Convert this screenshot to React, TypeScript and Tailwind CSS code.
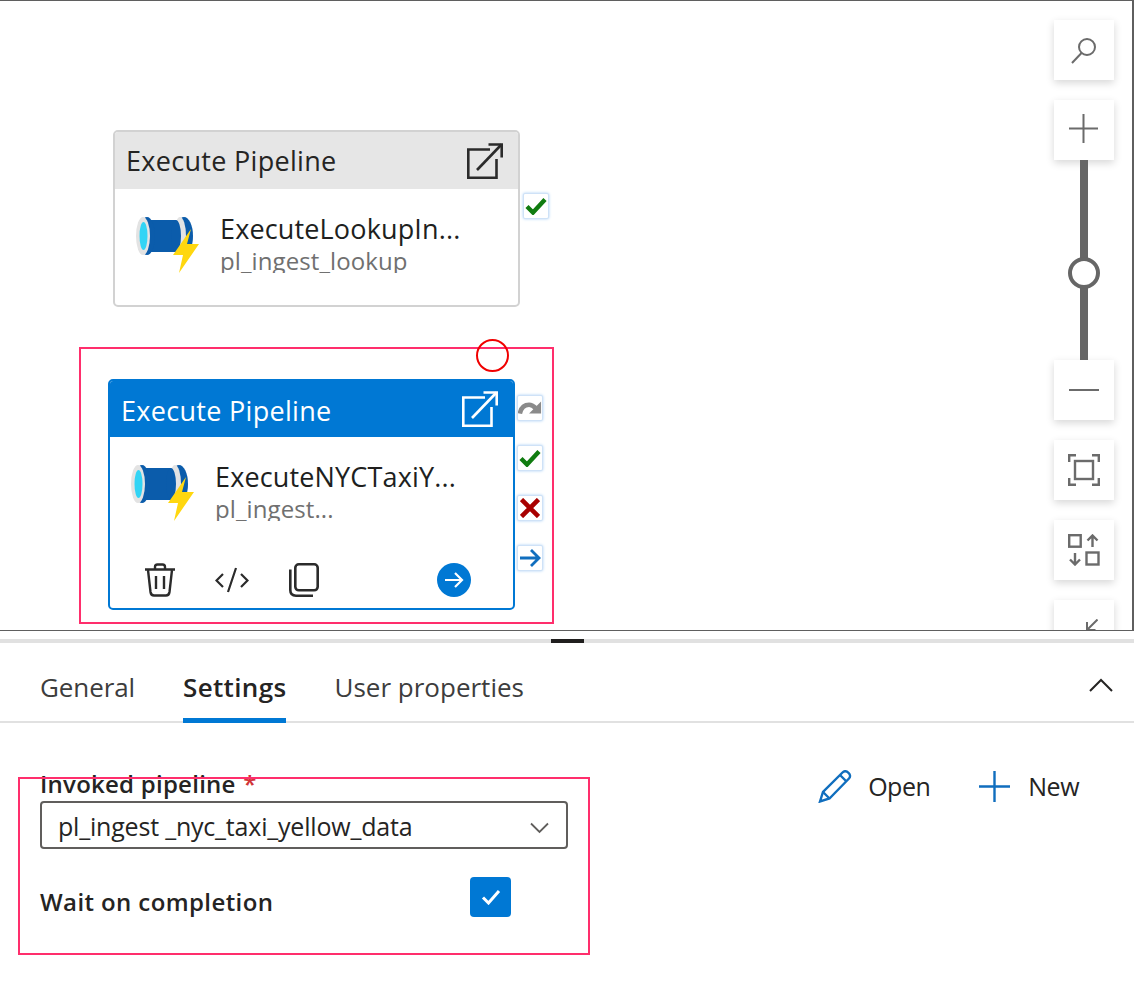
const FONT = "font-['Open_Sans',sans-serif]";

function OpenIcon({ color }: { color: string }) {
  return (
    <svg width="36" height="36" viewBox="0 0 36 36" fill="none" stroke={color} strokeWidth="2.6">
      <path d="M23 6.5H1.3V34.7H29.5V16" />
      <path d="M10 27L34.5 1.5" />
      <path d="M21.5 1.5H34.7V14.5" />
    </svg>
  );
}

function PipeIcon() {
  return (
    <svg className="shrink-0" width="64" height="57" viewBox="0 0 64 57">
      <ellipse cx="48" cy="19" rx="9" ry="19" fill="#0b5cab" />
      <ellipse cx="44" cy="19" rx="6" ry="19" fill="#e3e3e3" />
      <rect x="10" y="3" width="30" height="32" fill="#0b5cab" />
      <ellipse cx="40" cy="19" rx="5" ry="16" fill="#0b5cab" />
      <ellipse cx="11" cy="19" rx="8" ry="19" fill="#0b5cab" />
      <ellipse cx="7" cy="19" rx="7" ry="19" fill="#e3e3e3" />
      <ellipse cx="7.5" cy="19" rx="4" ry="14" fill="#32d4f5" />
      <path d="M55 12L37 38H47L43 56L63 27H51Z" fill="#ffd70f" />
    </svg>
  );
}

function Port({ children, className }: { children: React.ReactNode; className?: string }) {
  return (
    <div
      className={`flex h-[26px] w-[26px] items-center justify-center rounded-[2px] border border-[#cfe2f7] bg-white shadow-[0_0_3px_#a9cff5] ${className ?? ""}`}
    >
      {children}
    </div>
  );
}

const CheckGlyph = () => (
  <svg width="22" height="18" viewBox="0 0 22 18" fill="none" stroke="#107c10" strokeWidth="4.4">
    <path d="M2 9.5L8 15.5L20 2.5" />
  </svg>
);

const CrossGlyph = () => (
  <svg width="20" height="20" viewBox="0 0 20 20" fill="none" stroke="#a80000" strokeWidth="4.6">
    <path d="M1.5 1.5L18.5 18.5M18.5 1.5L1.5 18.5" />
  </svg>
);

const SkipGlyph = () => (
  <svg width="26" height="18" viewBox="0 0 26 18" fill="none">
    <path d="M2 15C3.5 8 8 5.5 12 5.5C15 5.5 17 7 19 9" stroke="#8a8a8a" strokeWidth="5" />
    <path d="M25 2V15H12Z" fill="#8a8a8a" />
  </svg>
);

const NextGlyph = () => (
  <svg width="22" height="20" viewBox="0 0 22 20" fill="none" stroke="#106ebe" strokeWidth="2.8">
    <path d="M1 10H20M12 2L20 10L12 18" />
  </svg>
);

function NodeBody({ name, sub, subWidth }: { name: string; sub: string; subWidth: string }) {
  return (
    <div className="flex gap-[20px] pl-[21px] pt-[28px]">
      <PipeIcon />
      <div className="-mt-[3px] min-w-0">
        <div className="text-[27px] leading-[30px] tracking-[0.15px] whitespace-nowrap text-[#201f1e]">{name}</div>
        <div className={`mt-[2px] h-[27px] overflow-hidden text-[24px] leading-[30px] tracking-[0.1px] whitespace-nowrap text-[#707070] ${subWidth}`}>
          {sub}
        </div>
      </div>
    </div>
  );
}

function ToolButton({ children }: { children: React.ReactNode }) {
  return (
    <div className="flex h-[60px] w-[60px] shrink-0 items-center justify-center bg-white shadow-[0_3px_8px_rgba(0,0,0,0.16)]">
      {children}
    </div>
  );
}

function Toolbar() {
  return (
    <div className="absolute left-[1054px] top-[19px] flex flex-col items-center">
      <ToolButton>
        <svg width="30" height="30" viewBox="0 0 30 30" fill="none" stroke="#6b6b6b" strokeWidth="2">
          <circle cx="18" cy="12" r="8" />
          <path d="M12.5 18L3 28" />
        </svg>
      </ToolButton>
      <div className="h-[20px]" />
      <ToolButton>
        <svg className="mb-[3px] mr-[2px]" width="29" height="29" viewBox="0 0 29 29" fill="none" stroke="#6b6b6b" strokeWidth="2">
          <path d="M14.5 0V29M0 14.5H29" />
        </svg>
      </ToolButton>
      <div className="relative flex h-[200px] w-[8px] justify-center bg-[#666666]">
        <div className="absolute top-[97px] h-[32px] w-[32px] rounded-full border-[4px] border-[#666666] bg-white" />
      </div>
      <ToolButton>
        <svg width="30" height="4" viewBox="0 0 30 4" fill="none" stroke="#6b6b6b" strokeWidth="2">
          <path d="M0 2H30" />
        </svg>
      </ToolButton>
      <div className="h-[20px]" />
      <ToolButton>
        <svg width="32" height="32" viewBox="0 0 32 32" fill="none" stroke="#6b6b6b" strokeWidth="2.4">
          <path d="M1.2 8V1.2H8M24 1.2H30.8V8M30.8 24V30.8H24M8 30.8H1.2V24" />
          <rect x="7" y="7" width="18" height="18" />
        </svg>
      </ToolButton>
      <div className="h-[20px]" />
      <ToolButton>
        <svg width="32" height="32" viewBox="0 0 32 32" fill="none" stroke="#6b6b6b" strokeWidth="2.4">
          <rect x="1.2" y="1.2" width="11.5" height="11.5" />
          <rect x="18.5" y="18.5" width="12" height="12" />
          <path d="M24.5 13V1.5M19.5 6.5L24.5 1.5L29.5 6.5" />
          <path d="M7 19V30.5M2 25.5L7 30.5L12 25.5" />
        </svg>
      </ToolButton>
      <div className="h-[20px]" />
      <div className="h-[60px] w-[60px] shrink-0 bg-white pl-[32px] pt-[19px] shadow-[0_3px_8px_rgba(0,0,0,0.16)]">
        <svg width="12" height="12" viewBox="0 0 12 12" fill="none" stroke="#6b6b6b" strokeWidth="2">
          <path d="M11.5 0.5L1.5 10.5M1 3V11H9.5" />
        </svg>
      </div>
    </div>
  );
}

export default function App() {
  return (
    <div className={`relative h-[1002px] w-[1134px] overflow-hidden bg-white ${FONT}`}>
      {/* pipeline canvas */}
      <div className="relative h-[631px] overflow-hidden border-t border-r-2 border-b border-[#5f5f5f]">
        <div className="absolute left-[113px] top-[129px] h-[177px] w-[407px] overflow-hidden rounded-[5px] border-2 border-[#d2d2d2] bg-white">
          <div className="flex h-[57px] items-center justify-between bg-[#e6e6e6] pl-[11px] pr-[15px]">
            <span className="pt-[2px] text-[27px] tracking-[0.3px] text-[#252423]">Execute Pipeline</span>
            <OpenIcon color="#2b2b2b" />
          </div>
          <NodeBody name="ExecuteLookupIn..." sub="pl_ingest_lookup" subWidth="w-[200px]" />
        </div>
        <Port className="absolute left-[523px] top-[192px]">
          <CheckGlyph />
        </Port>

        <div className="absolute left-[108px] top-[378px] h-[231px] w-[407px] overflow-hidden rounded-[5px] border-2 border-[#0078d4] bg-white">
          <div className="flex h-[56px] items-center justify-between bg-[#0078d4] pl-[11px] pr-[15px]">
            <span className="pt-[4px] text-[27px] tracking-[0.3px] text-white">Execute Pipeline</span>
            <OpenIcon color="#ffffff" />
          </div>
          <NodeBody name="ExecuteNYCTaxiY..." sub="pl_ingest..." subWidth="w-[130px]" />
          <div className="flex items-center pl-[34px] pt-[41px]">
            <svg width="32" height="34" viewBox="0 0 32 34" fill="none" stroke="#2b2b2b" strokeWidth="2.4">
              <path d="M1 6.5H31M11 6.5V4C11 2.5 12 1.5 13.5 1.5H18.5C20 1.5 21 2.5 21 4V6.5" />
              <path d="M4 7L6.5 29C6.8 31.2 8 32.5 10 32.5H22C24 32.5 25.2 31.2 25.5 29L28 7" />
              <path d="M12 13V26M20 13V26" />
            </svg>
            <svg className="ml-[39px]" width="34" height="26" viewBox="0 0 34 26" fill="none" stroke="#2b2b2b" strokeWidth="2.2">
              <path d="M8 7L1.5 13.5L8 20M26 7L32.5 13.5L26 20M21 1L13 25" />
            </svg>
            <svg className="ml-[40px]" width="30" height="34" viewBox="0 0 30 34" fill="none" stroke="#2b2b2b" strokeWidth="2.6">
              <rect x="6.3" y="1.3" width="22.4" height="26" rx="3.5" />
              <path d="M1.3 6.5V27C1.3 30.5 3.5 32.7 7 32.7H24" />
            </svg>
            <div className="ml-[118px] flex h-[34px] w-[34px] items-center justify-center rounded-full bg-[#0078d4]">
              <svg width="20" height="18" viewBox="0 0 20 18" fill="none" stroke="#ffffff" strokeWidth="2.2">
                <path d="M1 9H18M11 2L18 9L11 16" />
              </svg>
            </div>
          </div>
        </div>
        <div className="absolute left-[517px] top-[394px] flex flex-col gap-[24px]">
          <Port>
            <SkipGlyph />
          </Port>
          <Port>
            <CheckGlyph />
          </Port>
          <Port>
            <CrossGlyph />
          </Port>
          <Port>
            <NextGlyph />
          </Port>
        </div>

        <Toolbar />

        {/* annotation marks */}
        <div className="absolute left-[79px] top-[346px] h-[277px] w-[475px] border-2 border-[#ff2e6c]" />
        <div className="absolute left-[476px] top-[338px] h-[33px] w-[33px] rounded-full border-2 border-[#f00000]" />
      </div>

      {/* splitter */}
      <div className="mt-[8px] flex h-[4px] justify-center bg-[#e1e1e1]">
        <div className="h-[4px] w-[33px] bg-[#201f1e]" />
      </div>

      {/* tabs */}
      <div className="flex h-[80px] items-stretch justify-between border-b-2 border-[#e1e1e1] pl-[40px] pr-[21px]">
        <div className="flex gap-[48px]">
          <div className="flex h-[80px] items-center pt-[8px] text-[26px] tracking-[-0.1px] text-[#3d3d3d]">General</div>
          <div className="flex h-[80px] items-center border-b-[5px] border-[#0078d4] pt-[13px] text-[26px] font-semibold tracking-[0.35px] text-[#252423]">
            Settings
          </div>
          <div className="flex h-[80px] items-center pt-[8px] text-[26px] text-[#3d3d3d]">User properties</div>
        </div>
        <div className="flex items-center pt-[6px]">
          <svg width="24" height="14" viewBox="0 0 24 14" fill="none" stroke="#252423" strokeWidth="2">
            <path d="M1 13L12 2L23 13" />
          </svg>
        </div>
      </div>

      {/* settings form */}
      <div className="flex justify-between pl-[40px] pr-[55px] pt-[45px]">
        <div className="w-[528px]">
          <div className="h-[33px] text-[24px] leading-[32px] font-semibold tracking-[0.25px] text-[#252423]">
            Invoked pipeline <span className="ml-[1px] text-[#d13438]">*</span>
          </div>
          <div className="flex h-[48px] items-center justify-between rounded-[4px] border-2 border-[#605e5c] pl-[16px] pr-[17px]">
            <span className="pt-[3px] text-[25px] tracking-[-0.2px] text-[#252423]">pl_ingest _nyc_taxi_yellow_data</span>
            <svg className="mt-[6px]" width="19" height="12" viewBox="0 0 19 12" fill="none" stroke="#605e5c" strokeWidth="1.8">
              <path d="M1 1.5L9.5 10L18 1.5" />
            </svg>
          </div>
          <div className="mt-[28px] flex w-[471px] justify-between">
            <span className="pt-[7px] text-[24px] font-semibold tracking-[0.4px] text-[#252423]">Wait on completion</span>
            <div className="flex h-[40px] w-[41px] items-center justify-center rounded-[4px] bg-[#0078d4]">
              <svg width="20" height="16" viewBox="0 0 20 16" fill="none" stroke="#ffffff" strokeWidth="3">
                <path d="M2 8.5L7.5 14L18 2" />
              </svg>
            </div>
          </div>
        </div>
        <div className="mt-[1px] flex h-[34px] items-center">
          <svg width="34" height="33" viewBox="0 0 34 33" fill="none" stroke="#106ebe" strokeWidth="2.4">
            <path d="M2 31.5L5 22L24.5 2.5C26 1 28.5 1 30.5 2.8C32.5 4.7 32.5 7 31 8.5L11.5 28.5Z" />
            <path d="M5 22L11.5 28.5M22 5L28.5 11.5" />
          </svg>
          <span className="ml-[16px] pt-[1px] text-[25px] tracking-[-0.5px] text-[#252423]">Open</span>
          <svg className="ml-[49px]" width="31" height="31" viewBox="0 0 31 31" fill="none" stroke="#106ebe" strokeWidth="2.4">
            <path d="M15.5 0V31M0 15.5H31" />
          </svg>
          <span className="ml-[18px] pt-[1px] text-[25px] tracking-[-0.5px] text-[#252423]">New</span>
        </div>
      </div>

      <div className="absolute left-[18px] top-[777px] h-[178px] w-[572px] border-2 border-[#ff2e6c]" />
    </div>
  );
}
